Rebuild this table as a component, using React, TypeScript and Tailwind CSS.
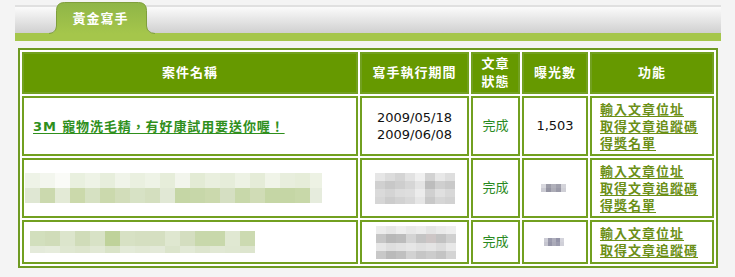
import * as React from "react";

const cjk = "font-['DejaVu_Sans','Noto_Sans_CJK_TC',sans-serif]";

// mosaic (pixelated) cells, one string per row, colours written out as classes
const titleBlur2 = [
  ["bg-[#eef3e7]", "bg-[#f3f6ee]", "bg-[#fafbf7]", "bg-[#e9f0df]", "bg-[#eef3e6]", "bg-[#e7eedc]", "bg-[#f0f4e9]", "bg-[#eaf0e0]", "bg-[#eef3e6]", "bg-[#e6edda]", "bg-[#f2f5ec]", "bg-[#e3ebd5]", "bg-[#e9efde]", "bg-[#e6edda]", "bg-[#edf2e4]", "bg-[#e5ecd8]", "bg-[#f0f4e8]", "bg-[#e8eedd]", "bg-[#e6edd9]", "bg-[#edf2e4]"],
  ["bg-[#dfe7d3]", "bg-[#cbd9ae]", "bg-[#e3ead6]", "bg-[#cbd9ab]", "bg-[#d6e1c2]", "bg-[#cbd9ad]", "bg-[#d2ddba]", "bg-[#d7e2c5]", "bg-[#d4dfbf]", "bg-[#e1e8d5]", "bg-[#c5d6a5]", "bg-[#c7d7a9]", "bg-[#cbd9ad]", "bg-[#d5dfc2]", "bg-[#c8d8aa]", "bg-[#d0dcb6]", "bg-[#c5d6a5]", "bg-[#c5d6a5]", "bg-[#c8d8a9]", "bg-[#e6ecdd]"],
];

const titleBlur3 = [
  ["bg-[#d2dfbd]", "bg-[#d0dcb9]", "bg-[#dce5cc]", "bg-[#d0dcb9]", "bg-[#d8e2c6]", "bg-[#bfd29a]", "bg-[#d7e1c4]", "bg-[#d5dfc1]", "bg-[#d5dfc1]", "bg-[#dfe7d0]", "bg-[#d4dec0]", "bg-[#c8d8ab]", "bg-[#c8d8ab]", "bg-[#e0e8d2]", "bg-[#ccdab1]"],
  ["bg-[#e4eada]", "bg-[#e6ecdc]", "bg-[#dfe7d1]", "bg-[#dde5cd]", "bg-[#e1e8d4]", "bg-[#d9e3c7]", "bg-[#e3ead8]", "bg-[#e1e8d4]", "bg-[#e3e9d8]", "bg-[#dbe4cb]", "bg-[#e2e9d6]", "bg-[#dde5ce]", "bg-[#e1e8d4]", "bg-[#dfe7d1]", "bg-[#dde5ce]"],
];

const dateBlur2 = [
  ["bg-[#e6e6e6]", "bg-[#dcdcdc]", "bg-[#d4d4d4]", "bg-[#e2e2e2]", "bg-[#f0f0f0]", "bg-[#d2d2d2]", "bg-[#e8e8e8]", "bg-[#dedede]"],
  ["bg-[#d0d0d0]", "bg-[#c8c8c8]", "bg-[#cecece]", "bg-[#d6d6d6]", "bg-[#e4e4e4]", "bg-[#bdbdbd]", "bg-[#cfcfcf]", "bg-[#c9c9c9]"],
  ["bg-[#dadada]", "bg-[#d4d4d4]", "bg-[#dcdcdc]", "bg-[#dedede]", "bg-[#ececec]", "bg-[#d0d0d0]", "bg-[#e0e0e0]", "bg-[#d8d8d8]"],
  ["bg-[#d6d6d6]", "bg-[#cccccc]", "bg-[#d2d2d2]", "bg-[#d8d8d8]", "bg-[#e6e6e6]", "bg-[#c8c8c8]", "bg-[#d6d6d6]", "bg-[#d2d2d2]"],
];

const dateBlur3 = [
  ["bg-[#ececec]", "bg-[#e6e6e6]", "bg-[#eeeeee]", "bg-[#e8e8e8]", "bg-[#ececec]", "bg-[#e4e4e4]", "bg-[#eaeaea]", "bg-[#eeeeee]"],
  ["bg-[#c6c6c6]", "bg-[#b8b8b8]", "bg-[#bcbcbc]", "bg-[#d4d4d4]", "bg-[#c4c4c4]", "bg-[#cdc6c6]", "bg-[#c2c2c2]", "bg-[#d0d0d0]"],
  ["bg-[#e6e6e6]", "bg-[#dedede]", "bg-[#e2e2e2]", "bg-[#e6e6e6]", "bg-[#e0e0e0]", "bg-[#e4e4e4]", "bg-[#dcdcdc]", "bg-[#e8e8e8]"],
  ["bg-[#c8c8c8]", "bg-[#bababa]", "bg-[#c0c0c0]", "bg-[#d2d2d2]", "bg-[#c6c6c6]", "bg-[#cccccc]", "bg-[#c4c4c4]", "bg-[#d4d4d4]"],
];

const countBlur2 = [
  ["bg-[#d8d8de]", "bg-[#9c9ca8]", "bg-[#b0b0ba]", "bg-[#a0a0ac]", "bg-[#d4d4da]"],
  ["bg-[#cacad2]", "bg-[#9494a2]", "bg-[#acacb6]", "bg-[#9a9aa8]", "bg-[#cfcfd6]"],
];

const countBlur3 = [
  ["bg-[#cdcdd6]", "bg-[#9a9aac]", "bg-[#aeaebc]", "bg-[#9494a8]", "bg-[#d4d4dc]"],
  ["bg-[#c6c6d0]", "bg-[#9696a8]", "bg-[#aaaab8]", "bg-[#9c9cae]", "bg-[#d0d0d8]"],
];

function Mosaic({ rows, cell, rowH }: { rows: string[][]; cell: string; rowH: string[] }) {
  return (
    <div className="flex flex-col">
      {rows.map((row, i) => (
        <div key={i} className={`flex ${rowH[i]}`}>
          {row.map((c, j) => (
            <div key={j} className={`${cell} h-full ${c}`} />
          ))}
        </div>
      ))}
    </div>
  );
}

function Links({ count }: { count: number }) {
  const items = ["輸入文章位址", "取得文章追蹤碼", "得獎名單"].slice(0, count);
  return (
    <div className="flex flex-col items-start">
      {items.map((t) => (
        <a key={t} href="#" className="font-bold text-[13px] leading-[17px] tracking-[1px] text-[#6b8f16] underline underline-offset-[2px]">
          {t}
        </a>
      ))}
    </div>
  );
}

const th = "border-2 border-[#72a020] bg-[#669900] text-white font-bold text-[13px] leading-[18px] tracking-[1px] text-center align-middle p-0";
const td = "border-2 border-[#72a020] bg-white align-middle p-0";
const done = "text-center text-[13px] text-[#2a8a22]";

export default function App() {
  return (
    <div className={`w-[735px] h-[277px] bg-[#f4f4f4] ${cjk}`}>
      <div className="relative h-[41px]">
        <div className="ml-[15px] w-[706px] pt-[5px]">
          <div className="h-[2px] bg-[#e0e0e0]" />
          <div className="h-[26px] bg-gradient-to-b from-[#fbfbfb] to-[#d0d0d0]" />
          <div className="h-[8px] bg-[#a5c64b]" />
        </div>
        <div className="absolute left-[49px] top-[2px] w-[106px] h-[32px]">
          <svg width="106" height="32" viewBox="0 0 106 32" className="absolute inset-0">
            <defs>
              <linearGradient id="tabg" x1="0" y1="0" x2="0" y2="1">
                <stop offset="0" stopColor="#8fb547" />
                <stop offset="1" stopColor="#a5c64b" />
              </linearGradient>
            </defs>
            <path d="M0 32 Q7 31 7.5 24 L7.5 8.5 Q7.5 0.5 15.5 0.5 L89.5 0.5 Q97.5 0.5 97.5 8.5 L97.5 24 Q98 31 106 32 Z" fill="url(#tabg)" />
            <path d="M0 31.5 Q7 31 7.5 24 L7.5 8.5 Q7.5 0.5 15.5 0.5 L89.5 0.5 Q97.5 0.5 97.5 8.5 L97.5 24 Q98 31 106 31.5" fill="none" stroke="#7f9f3c" strokeWidth="1" />
          </svg>
          <div className="relative pt-[9px] text-center pr-[3px] text-white font-bold text-[13px] leading-[16px] tracking-[1px]">
            黃金寫手
          </div>
        </div>
      </div>

      <table className="mt-[7px] ml-[18px] w-[700px] table-fixed border-separate border-spacing-[2px] border-2 border-[#6e9a22] bg-white">
        <thead>
          <tr className="h-[42px]">
            <th className={`${th} w-[336px]`}>案件名稱</th>
            <th className={`${th} w-[109px]`}>寫手執行期間</th>
            <th className={`${th} w-[49px]`}>
              文章
              <br />
              狀態
            </th>
            <th className={`${th} w-[66px]`}>曝光數</th>
            <th className={`${th} w-[124px]`}>功能</th>
          </tr>
        </thead>
        <tbody>
          <tr className="h-[60px]">
            <td className={`${td} pl-[9px]`}>
              <a href="#" className="font-bold text-[13px] leading-[17px] tracking-[0.9px] text-[#2f8f1c] underline underline-offset-[2px]">
                3M 寵物洗毛精，有好康試用要送你喔！
              </a>
            </td>
            <td className={`${td} text-center text-[13px] leading-[17px] text-[#111]`}>
              2009/05/18
              <br />
              2009/06/08
            </td>
            <td className={`${td} ${done}`}>完成</td>
            <td className={`${td} text-center text-[13px] text-[#111]`}>1,503</td>
            <td className={`${td} pl-[8px]`}>
              <Links count={3} />
            </td>
          </tr>
          <tr className="h-[60px]">
            <td className={`${td} pl-[1px]`}>
              <Mosaic rows={titleBlur2} cell="w-[15px] last:w-[12px]" rowH={["h-[15px]", "h-[15px]"]} />
            </td>
            <td className={td}>
              <div className="flex justify-center pl-[1px]">
                <Mosaic rows={dateBlur2} cell="w-[10px]" rowH={["h-[8px]", "h-[8px]", "h-[8px]", "h-[7px]"]} />
              </div>
            </td>
            <td className={`${td} ${done}`}>完成</td>
            <td className={td}>
              <div className="flex justify-center pr-[4px]">
                <Mosaic rows={countBlur2} cell="w-[5px]" rowH={["h-[4px]", "h-[4px]"]} />
              </div>
            </td>
            <td className={`${td} pl-[8px]`}>
              <Links count={3} />
            </td>
          </tr>
          <tr className="h-[44px]">
            <td className={`${td} pl-[6px]`}>
              <Mosaic rows={titleBlur3} cell="w-[15px]" rowH={["h-[15px]", "h-[7px]"]} />
            </td>
            <td className={td}>
              <div className="flex justify-center pl-[3px]">
                <Mosaic rows={dateBlur3} cell="w-[10px]" rowH={["h-[8px]", "h-[9px]", "h-[8px]", "h-[8px]"]} />
              </div>
            </td>
            <td className={`${td} ${done}`}>完成</td>
            <td className={td}>
              <div className="flex justify-center pr-[2px]">
                <Mosaic rows={countBlur3} cell="w-[4px]" rowH={["h-[4px]", "h-[4px]"]} />
              </div>
            </td>
            <td className={`${td} pl-[8px]`}>
              <Links count={2} />
            </td>
          </tr>
        </tbody>
      </table>
    </div>
  );
}
